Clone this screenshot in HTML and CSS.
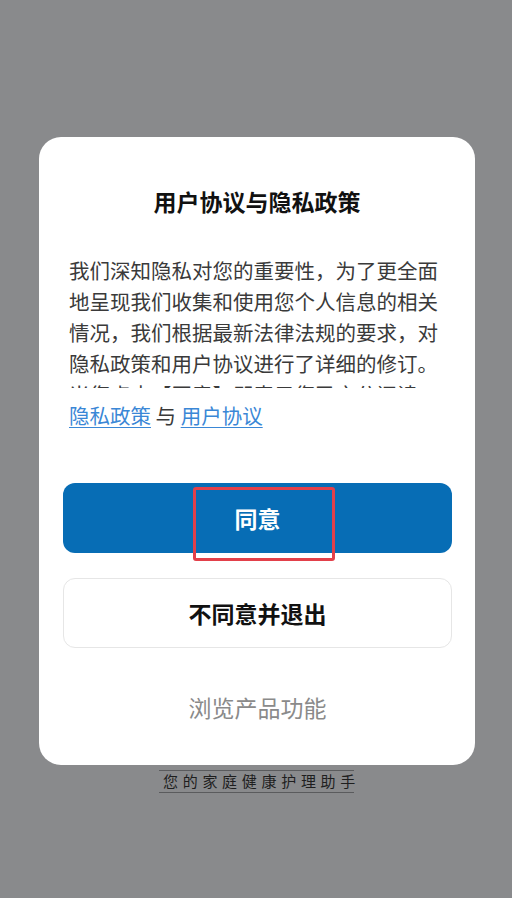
FILE: index.html
```html
<!DOCTYPE html>
<html lang="zh-CN">
<head>
<meta charset="utf-8">
<title>用户协议与隐私政策</title>
<link rel="stylesheet" href="styles.css">
</head>
<body>
<div class="screen">
  <div class="dialog">
    <h1 class="dialog-title">用户协议与隐私政策</h1>
    <div class="dialog-scroll">
      <p class="dialog-text">我们深知隐私对您的重要性，为了更全面地呈现我们收集和使用您个人信息的相关情况，我们根据最新法律法规的要求，对隐私政策和用户协议进行了详细的修订。当您点击【同意】即表示您已充分阅读、理解并接受更新后的隐私政策和用户协议的全部内容。</p>
    </div>
    <div class="dialog-links">
      <a class="link" href="#">隐私政策</a> 与 <a class="link" href="#">用户协议</a>
    </div>
    <div class="actions">
      <button class="btn btn-primary">同意<span class="highlight"></span></button>
      <button class="btn btn-outline">不同意并退出</button>
      <button class="btn-text">浏览产品功能</button>
    </div>
  </div>
  <div class="slogan">您的家庭健康护理助手</div>
</div>
</body>
</html>
```
FILE: styles.css
```css
* { box-sizing: border-box; }
html, body {
  margin: 0;
  padding: 0;
}
body {
  width: 512px;
  height: 898px;
  background: #898a8c;
  font-family: "Noto Sans CJK SC", "Noto Sans", sans-serif;
  overflow: hidden;
}
.screen {
  display: flex;
  flex-direction: column;
  align-items: flex-start;
  padding-top: 137px;
}
.dialog {
  margin-left: 39px;
  width: 436px;
  background: #ffffff;
  border-radius: 22px;
  padding: 49px 0 43px;
  display: flex;
  flex-direction: column;
}
.dialog-title {
  margin: 0;
  font-size: 23px;
  line-height: 30px;
  font-weight: 700;
  color: #111;
  text-align: center;
}
.dialog-scroll {
  margin: 39px 30px 0;
  height: 133px;
  overflow: hidden;
}
.dialog-text {
  margin: 0;
  font-size: 20.5px;
  line-height: 31px;
  color: #3a3a3a;
}
.dialog-links {
  margin: 12px 30px 0;
  font-size: 20.5px;
  line-height: 31px;
  color: #3a3a3a;
}
.link {
  color: #3a87d6;
  text-decoration: underline;
  text-underline-offset: 3px;
  text-decoration-thickness: 1px;
}
.actions {
  margin-top: 52px;
  padding: 0 23px 0 24px;
  display: flex;
  flex-direction: column;
}
.btn {
  position: relative;
  height: 70px;
  border-radius: 12px;
  font-family: inherit;
  font-size: 23px;
  font-weight: 700;
  padding: 0;
  cursor: pointer;
}
.btn-primary {
  background: #076db5;
  color: #ffffff;
  border: none;
}
.highlight {
  position: absolute;
  left: 130px;
  top: 4px;
  width: 142px;
  height: 74px;
  border: 3px solid #e2404a;
  border-radius: 3px;
}
.btn-outline {
  margin-top: 25px;
  background: #ffffff;
  color: #111;
  border: 1px solid #e6e6e6;
}
.btn-text {
  margin-top: 44px;
  background: none;
  border: none;
  padding: 0;
  font-family: inherit;
  font-size: 23px;
  line-height: 30px;
  color: #8a8a8a;
}
.slogan {
  margin: 5px 0 0 159px;
  width: 195px;
  padding: 1px 0 2px 4px;
  border-top: 1px solid #5a5b5d;
  border-bottom: 1px solid #5a5b5d;
  font-size: 15px;
  line-height: 18px;
  letter-spacing: 4.7px;
  color: #1e1e1e;
  white-space: nowrap;
}
```
